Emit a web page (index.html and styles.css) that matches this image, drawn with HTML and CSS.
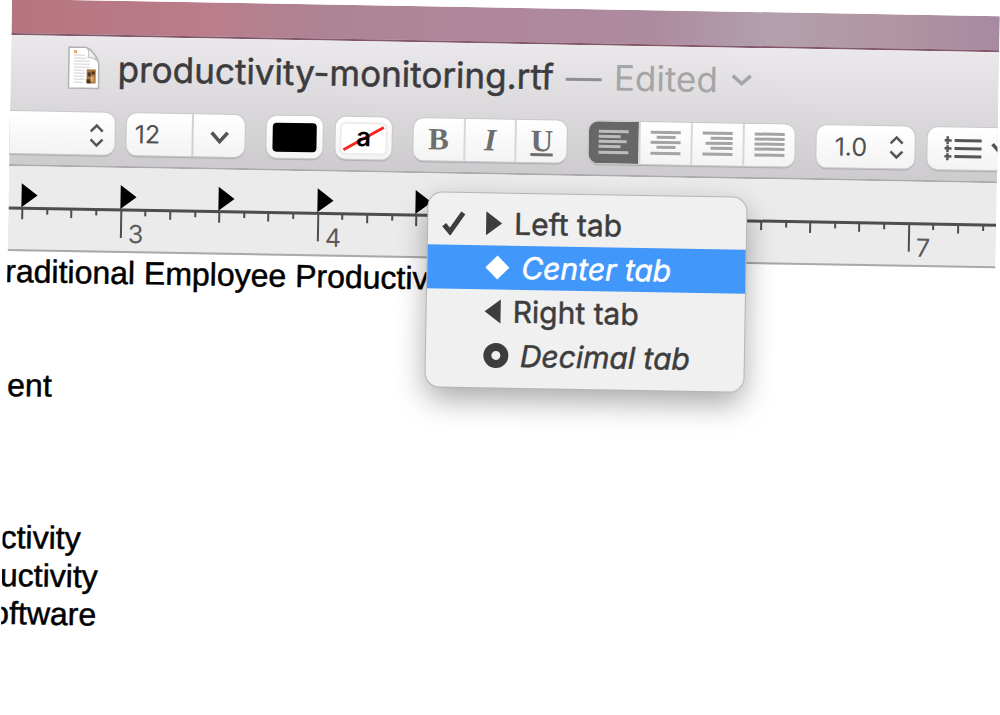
FILE: index.html
```html
<!DOCTYPE html>
<html lang="en">
<head>
<meta charset="utf-8">
<title>productivity-monitoring.rtf</title>
<link rel="stylesheet" href="styles.css">
</head>
<body>
<main class="window">
  <div class="wallpaper"></div>
  <header class="chrome">
    <div class="titlebar">
      <svg class="file-icon" width="34" height="44" viewBox="0 0 34 44" aria-hidden="true">
        <path d="M2 1h16q5 1 8 5 6 7 6 13v23H2z" fill="#fff" stroke="#b3b1b3" stroke-width="1.5"/>
        <path d="M20 2q3 4 1 9 5 0 9 3-3-8-10-12z" fill="#f2f2f2" stroke="#bbb"/>
        <path d="M7 9h11M7 12h12M7 15h16M7 18h16M7 21h16M7 24h10M7 27h11M7 30h10M7 33h11M7 36h9" stroke="#d0d0d0"/>
        <path d="M7 4h3v3H7z" fill="#e9a263"/>
        <path d="M20 23h9v14h-9z" fill="#a8773c"/>
        <path d="M21 26h3v4h-3zM25 25h3v3h-3zM20 33h4v4h-4z" fill="#4c3424"/>
        <path d="M24 30h3v5h-3z" fill="#d7ab73"/>
      </svg>
      <h1 class="title">productivity-monitoring.rtf</h1>
      <span class="dash" aria-hidden="true"></span>
      <button class="edited">Edited
        <svg width="24" height="14" viewBox="0 0 24 14" aria-hidden="true"><path d="M3 3l9 8 9-8" fill="none" stroke="currentColor" stroke-width="3.5"/></svg>
      </button>
    </div>
    <div class="toolbar">
      <button class="control font" aria-label="Font">
        <svg width="16" height="26" viewBox="0 0 16 26"><path d="M2 9l6-6 6 6M2 17l6 6 6-6" fill="none" stroke="#555" stroke-width="2.5"/></svg>
      </button>
      <div class="control combo">
        <input class="size" type="text" value="12" aria-label="Font size">
        <button class="drop" aria-label="Choose font size">
          <svg width="20" height="14" viewBox="0 0 20 14"><path d="M2 2l8 9 8-9" fill="none" stroke="#555" stroke-width="3.5"/></svg>
        </button>
      </div>
      <button class="control well" aria-label="Text color"><span class="swatch"></span></button>
      <button class="control well second" aria-label="Highlight color">
        <span class="swatch clear"><svg class="slash" viewBox="0 0 44 30" width="44" height="30" aria-hidden="true"><path d="M2 26L42 3" stroke="#f5271e" stroke-width="3"/></svg><span class="letter">a</span></span>
      </button>
      <div class="control group styles">
        <button class="bold">B</button>
        <button class="italic">I</button>
        <button class="underline">U</button>
      </div>
      <div class="control group align">
        <button class="active" aria-label="Align left"><svg width="32" height="28" viewBox="0 0 32 28"><path d="M1 3h30M1 8h22M1 13h28M1 18h22M1 24h30"/></svg></button>
        <button aria-label="Align center"><svg width="32" height="28" viewBox="0 0 32 28"><path d="M1 3h30M7 8h19M1 13h30M7 18h19M1 24h30"/></svg></button>
        <button aria-label="Align right"><svg width="32" height="28" viewBox="0 0 32 28"><path d="M1 3h30M9 8h22M4 13h27M9 18h22M1 24h30"/></svg></button>
        <button aria-label="Justify"><svg width="32" height="28" viewBox="0 0 32 28"><path d="M1 3h30M1 8h30M1 13h30M1 18h30M1 24h30"/></svg></button>
      </div>
      <button class="control spacing" aria-label="Line spacing">1.0
        <svg width="16" height="26" viewBox="0 0 16 26"><path d="M2 9l6-6 6 6M2 17l6 6 6-6" fill="none" stroke="#555" stroke-width="2.5"/></svg>
      </button>
      <button class="control list" aria-label="List style">
        <svg width="76" height="30" viewBox="0 0 76 30" fill="none" stroke="#555">
          <path d="M13 7h27M13 15h27M13 23h27" stroke-width="3"/>
          <path d="M3 7h7M3 15h7M3 23h7M6 3v8M6 12v7M6 20v7" stroke-width="2.5"/>
          <path d="M51 10l8 9 8-9" stroke-width="3.5"/>
        </svg>
      </button>
    </div>
  </header>
  <div class="ruler">
    <svg width="1200" height="83" aria-hidden="true">
      <defs>
        <pattern id="inch" x="111" width="197" height="83" patternUnits="userSpaceOnUse">
          <path d="M2 42v28M26 42v6M51 42v9M76 42v6M100 42v11M125 42v6M149 42v9M174 42v6" stroke="#4d4d4d" stroke-width="2"/>
        </pattern>
      </defs>
      <rect width="1200" height="83" fill="url(#inch)"/>
      <path d="M0 42h1200" stroke="#4d4d4d" stroke-width="3"/>
      <path d="M13 17l16 12-16 12zM112 17l16 12-16 12zM210 17l16 12-16 12zM309 17l16 12-16 12zM407 17l16 12-16 12z"/>
      <g class="marks"><text x="120" y="75">3</text><text x="317" y="75">4</text><text x="908" y="75">7</text></g>
    </svg>
  </div>
  <article class="document">
    <p class="line">raditional Employee Productiv</p>
    <p class="line late">ent</p>
    <ul class="items">
      <li class="line">ctivity</li>
      <li class="line">uctivity</li>
      <li class="line cut">oftware</li>
    </ul>
  </article>
  <div class="menu" role="menu">
    <button class="item" role="menuitemradio" aria-checked="true">
      <svg class="check" width="24" height="26" viewBox="0 0 24 26"><path d="M2 15l6 7L21 3" fill="none" stroke="currentColor" stroke-width="5"/></svg>
      <svg class="mark" width="18" height="26" viewBox="0 0 18 26"><path d="M1 1l16 12L1 25z" fill="currentColor"/></svg>
      <span>Left tab</span>
    </button>
    <button class="item wide selected" role="menuitemradio" aria-checked="false">
      <svg class="mark" width="26" height="26" viewBox="0 0 26 26"><path d="M13 1l12 12-12 12L1 13z" fill="currentColor"/></svg>
      <span>Center tab</span>
    </button>
    <button class="item" role="menuitemradio" aria-checked="false">
      <svg class="mark" width="18" height="26" viewBox="0 0 18 26"><path d="M17 1L1 13l16 12z" fill="currentColor"/></svg>
      <span>Right tab</span>
    </button>
    <button class="item wide" role="menuitemradio" aria-checked="false">
      <svg class="mark" width="26" height="26" viewBox="0 0 26 26"><circle cx="13" cy="13" r="8.5" fill="none" stroke="currentColor" stroke-width="8"/></svg>
      <span>Decimal tab</span>
    </button>
  </div>
</main>
</body>
</html>
```
FILE: styles.css
```css
* { box-sizing: border-box; }

body {
  margin: 0;
  overflow: hidden;
  background: #fff;
  font-family: Inter, "Liberation Sans", sans-serif;
}

button, input {
  margin: 0;
  padding: 0;
  border: 0;
  background: none;
  color: inherit;
  font: inherit;
}

.window {
  position: relative;
  margin: -1px 0 0 12px;
  min-height: 100vh;
  overflow: hidden;
  transform: rotate(1deg);
  transform-origin: 0 0;
}

.wallpaper {
  height: 36px;
  background: linear-gradient(90deg, #b5747f 0%, #bb7d8b 20%, #ac8494 32%, #b0869a 45%, #ad8b9f 65%, #b3a0ad 77%, #b1949f 90%, #a789a2 100%);
  border-bottom: 2px solid #83586b;
}

.chrome {
  height: 131px;
  background: linear-gradient(#eae8ea, #cdcbce);
  border-bottom: 2px solid #acaaad;
}

.titlebar {
  display: flex;
  align-items: center;
  height: 64px;
  padding-left: 56px;
}

.title {
  margin: 0 0 0 17px;
  color: #3c3b3d;
  font-size: 35px;
  font-weight: 400;
  -webkit-text-stroke: 0.5px #3c3b3d;
}

.dash {
  width: 36px;
  height: 3px;
  margin: 4px 12px 0;
  background: #8f8e90;
}

.edited {
  display: flex;
  align-items: center;
  gap: 12px;
  color: #a5a4a6;
  font-size: 35px;
}

.toolbar {
  display: flex;
  align-items: center;
  height: 66px;
  color: #505050;
  font-size: 25px;
}

.control {
  flex: none;
  height: 42px;
  border-radius: 10px;
  background: linear-gradient(#fff, #f3f3f3);
  box-shadow: 0 0 0 1px #c9c7ca, 0 2px 1px #aeacaf;
}

.font {
  width: 105px;
  padding-right: 10px;
  border-radius: 0 10px 10px 0;
  text-align: right;
}

.font svg, .spacing svg { vertical-align: middle; }

.combo {
  display: flex;
  width: 118px;
  margin-left: 12px;
}

.size {
  width: 67px;
  padding-left: 8px;
  border-right: 2px solid #d2d0d3;
}

.drop { flex: 1; }

.well {
  width: 56px;
  margin-left: 22px;
  padding: 6px;
}

.second { margin-left: 13px; }

.swatch {
  position: relative;
  display: block;
  height: 29px;
  border-radius: 4px;
  background: #000;
}

.clear {
  background: #fff;
  box-shadow: 0 0 0 2px #ececec;
  color: #000;
  font: 600 26px/26px Inter, sans-serif;
}

.slash {
  position: absolute;
  inset: 0;
}

.letter { position: relative; }

.group {
  display: flex;
  overflow: hidden;
}

.group button { flex: 1; }
.group button + button { border-left: 2px solid #d8d6d9; }

.styles {
  width: 153px;
  margin-left: 22px;
  color: #6e6e6e;
  font: 700 31px "Liberation Serif", serif;
}

.italic { font-style: italic; }
.underline { text-decoration: underline 3px; }

.align {
  width: 206px;
  margin-left: 22px;
}

.align svg {
  display: block;
  margin: 0 auto;
  stroke: #a4a4a4;
  stroke-width: 3;
}

.align .active { background: #676767; }
.align .active svg { stroke: #bdbdbd; }

.spacing {
  width: 98px;
  margin-left: 22px;
  padding: 0 10px 0 18px;
  display: flex;
  align-items: center;
  justify-content: space-between;
}

.list {
  width: 110px;
  margin-left: 13px;
  padding-left: 14px;
  text-align: left;
}

.list svg { display: block; }

.ruler {
  height: 85px;
  overflow: hidden;
  background: #ebebeb;
  border-bottom: 2px solid #a9a9a9;
}

.ruler svg { display: block; }

.marks {
  fill: #5a5a5a;
  font-size: 25px;
}

.document {
  margin-left: -2px;
  padding-top: 1px;
  color: #000;
  font: 32px/38px "Liberation Sans", Arial, sans-serif;
  -webkit-text-stroke: 0.5px #000;
}

.line { margin: 0; white-space: nowrap; }
.late { margin-top: 76px; padding-left: 4px; }

.items {
  margin: 114px 0 0;
  padding: 0;
  list-style: none;
}

.cut { margin-left: -8px; }

.menu {
  position: absolute;
  left: 420px;
  top: 186px;
  width: 318px;
  padding: 8px 0 10px;
  border-radius: 14px;
  background: #f0f0f0;
  box-shadow: 0 0 0 1px #b5b5b5, 0 12px 30px rgba(0, 0, 0, 0.35);
}

.item {
  position: relative;
  display: grid;
  grid-template-columns: 18px 1fr;
  align-items: center;
  gap: 11px;
  width: 100%;
  height: 44px;
  padding-left: 57px;
  color: #3d3d3d;
  font-size: 30px;
  text-align: left;
  -webkit-text-stroke: 0.5px currentColor;
}

.check {
  position: absolute;
  left: 14px;
  top: 9px;
}

.wide {
  grid-template-columns: 26px 1fr;
  font-style: italic;
}

.selected {
  background: #4297fb;
  color: #fff;
}
```
